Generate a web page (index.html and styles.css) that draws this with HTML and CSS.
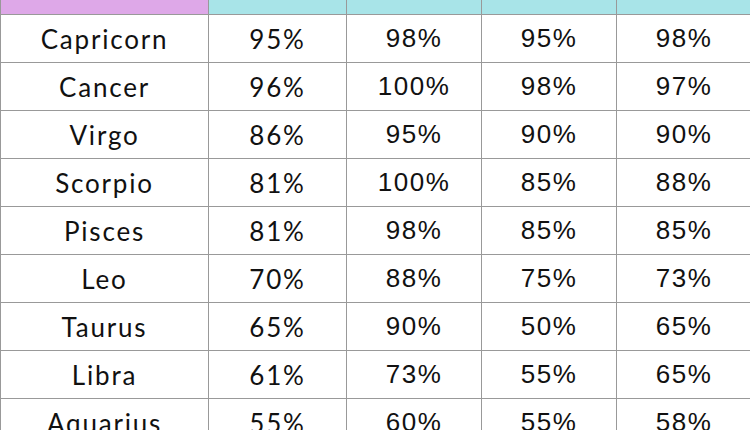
FILE: index.html
```html
<!DOCTYPE html>
<html>
<head>
<meta charset="utf-8">
<link rel="stylesheet" href="styles.css">
</head>
<body>
<table class="chart">
  <colgroup>
    <col class="c-sign"><col class="c-num"><col class="c-num2"><col class="c-num2"><col class="c-num2">
  </colgroup>
  <thead>
    <tr class="head"><th class="h-sign"></th><th class="h-val"></th><th class="h-val"></th><th class="h-val"></th><th class="h-val"></th></tr>
  </thead>
  <tbody>
    <tr><td class="sign">Capricorn</td><td class="v1">95%</td><td>98%</td><td>95%</td><td>98%</td></tr>
    <tr><td class="sign">Cancer</td><td class="v1">96%</td><td>100%</td><td>98%</td><td>97%</td></tr>
    <tr><td class="sign">Virgo</td><td class="v1">86%</td><td>95%</td><td>90%</td><td>90%</td></tr>
    <tr><td class="sign">Scorpio</td><td class="v1">81%</td><td>100%</td><td>85%</td><td>88%</td></tr>
    <tr><td class="sign">Pisces</td><td class="v1">81%</td><td>98%</td><td>85%</td><td>85%</td></tr>
    <tr><td class="sign">Leo</td><td class="v1">70%</td><td>88%</td><td>75%</td><td>73%</td></tr>
    <tr><td class="sign">Taurus</td><td class="v1">65%</td><td>90%</td><td>50%</td><td>65%</td></tr>
    <tr><td class="sign">Libra</td><td class="v1">61%</td><td>73%</td><td>55%</td><td>65%</td></tr>
    <tr><td class="sign">Aquarius</td><td class="v1">55%</td><td>60%</td><td>55%</td><td>58%</td></tr>
  </tbody>
</table>
</body>
</html>
```

FILE: styles.css
```css
html, body {
  margin: 0;
  padding: 0;
  background: #ffffff;
  overflow: hidden;
}
.chart {
  border-collapse: collapse;
  table-layout: fixed;
  width: 750px;
  color: #111;
  font-family: "Liberation Sans", Arial, sans-serif;
  font-size: 26px;
  letter-spacing: 1.5px;
}
.c-sign { width: 208px; }
.c-num { width: 138px; }
.c-num2 { width: 135px; }
.chart th, .chart td {
  border: 1px solid #999999;
  padding: 0;
  text-align: center;
  vertical-align: middle;
}
.head th {
  height: 14px;
  border-top: none;
}
.h-sign { background: #dea8e8; }
.h-val { background: #a8e4e8; }
.chart td {
  height: 47px;
}
.sign, .v1 {
  font-family: "Lato", "Noto Sans", sans-serif;
  font-size: 26px;
  letter-spacing: 1.8px;
}
```
